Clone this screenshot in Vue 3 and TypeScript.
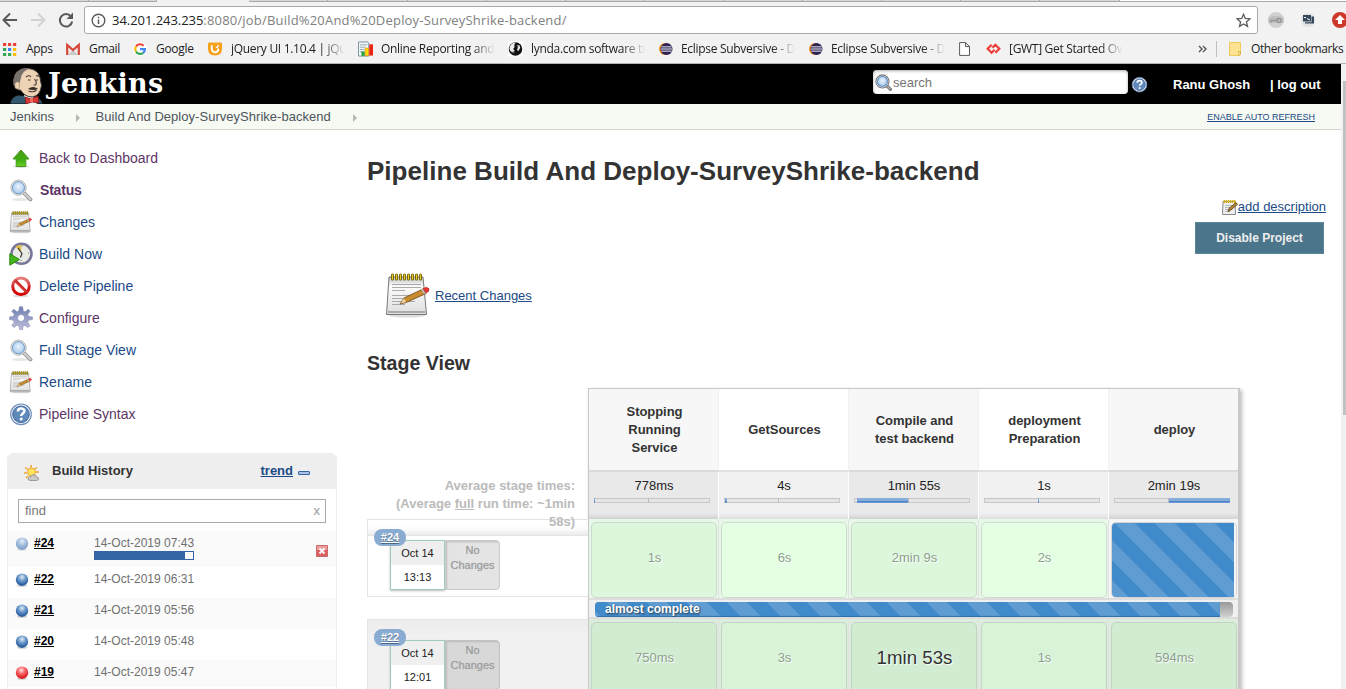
<script setup lang="ts">
interface Bookmark { icon: string; label: string; width: number; fade?: boolean }
interface Task { icon: string; label: string; visited?: boolean; current?: boolean }
interface Build { id: string; date: string; icon: string; progress?: number }
interface Stage { name: string; avg: string; from: number; to: number }
interface Run { id: string; day: string; time: string; cells: string[]; running?: boolean }

const tabs: number[] = [89, 68]
const laterTabs: number[] = [79, 80, 79, 79, 79, 79, 79, 79, 79, 79, 80]

const bookmarks: Bookmark[] = [
  { icon: 'apps', label: 'Apps', width: 63 },
  { icon: 'gmail', label: 'Gmail', width: 67 },
  { icon: 'google', label: 'Google', width: 75 },
  { icon: 'jquery', label: 'jQuery UI 1.10.4 | jQu', width: 150, fade: true },
  { icon: 'report', label: 'Online Reporting and', width: 150, fade: true },
  { icon: 'lynda', label: 'lynda.com software tr', width: 150, fade: true },
  { icon: 'eclipse', label: 'Eclipse Subversive - D', width: 150, fade: true },
  { icon: 'eclipse', label: 'Eclipse Subversive - D', width: 150, fade: true },
  { icon: 'file', label: '', width: 28 },
  { icon: 'gwt', label: '[GWT] Get Started Ov', width: 150, fade: true },
]

const tasks: Task[] = [
  { icon: 'up', label: 'Back to Dashboard', visited: true },
  { icon: 'search', label: 'Status', visited: true, current: true },
  { icon: 'notepad', label: 'Changes' },
  { icon: 'clock', label: 'Build Now' },
  { icon: 'stop', label: 'Delete Pipeline' },
  { icon: 'gear', label: 'Configure', visited: true },
  { icon: 'search', label: 'Full Stage View' },
  { icon: 'notepad', label: 'Rename' },
  { icon: 'help', label: 'Pipeline Syntax', visited: true },
]

const builds: Build[] = [
  { id: '#24', date: '14-Oct-2019 07:43', icon: 'pale', progress: 92 },
  { id: '#22', date: '14-Oct-2019 06:31', icon: 'blue' },
  { id: '#21', date: '14-Oct-2019 05:56', icon: 'blue' },
  { id: '#20', date: '14-Oct-2019 05:48', icon: 'blue' },
  { id: '#19', date: '14-Oct-2019 05:47', icon: 'red' },
]

const stages: Stage[] = [
  { name: 'Stopping Running Service', avg: '778ms', from: 0, to: 1 },
  { name: 'GetSources', avg: '4s', from: 1, to: 3 },
  { name: 'Compile and test backend', avg: '1min 55s', from: 3, to: 54 },
  { name: 'deployment Preparation', avg: '1s', from: 54, to: 55 },
  { name: 'deploy', avg: '2min 19s', from: 55, to: 116 },
]

const runs: Run[] = [
  { id: '#24', day: 'Oct 14', time: '13:13', cells: ['1s', '6s', '2min 9s', '2s', ''], running: true },
  { id: '#22', day: 'Oct 14', time: '12:01', cells: ['750ms', '3s', '1min 53s', '1s', '594ms'] },
]
</script>

<template>
  <div class="window">
    <svg class="defs" width="0" height="0" aria-hidden="true">
      <defs>
        <linearGradient id="g-green" x1="0" y1="0" x2="0" y2="1"><stop offset="0" stop-color="#4a9a1c" /><stop offset=".6" stop-color="#3fae0e" /><stop offset="1" stop-color="#6ccf28" /></linearGradient>
        <linearGradient id="g-paper" x1="0" y1="0" x2="0" y2="1"><stop offset="0" stop-color="#c4c4c4" /><stop offset=".25" stop-color="#fbfbfb" /><stop offset="1" stop-color="#dedede" /></linearGradient>
        <linearGradient id="g-red" x1="0" y1="0" x2="0" y2="1"><stop offset="0" stop-color="#e58080" /><stop offset=".6" stop-color="#cf1b1b" /><stop offset="1" stop-color="#d80000" /></linearGradient>
        <linearGradient id="g-gear" x1="0" y1="0" x2="0" y2="1"><stop offset="0" stop-color="#6c7fae" /><stop offset="1" stop-color="#c3bfdf" /></linearGradient>
        <radialGradient id="g-lens" cx=".5" cy=".4" r=".6"><stop offset="0" stop-color="#e8f2fc" /><stop offset="1" stop-color="#a9cbee" /></radialGradient>
        <radialGradient id="g-blue" cx=".5" cy=".3" r=".65"><stop offset="0" stop-color="#e4ecf2" /><stop offset=".45" stop-color="#6f9ccb" /><stop offset="1" stop-color="#22559b" /></radialGradient>
        <radialGradient id="g-pale" cx=".5" cy=".3" r=".65"><stop offset="0" stop-color="#e6eef5" /><stop offset=".5" stop-color="#a5c0df" /><stop offset="1" stop-color="#7d9fcb" /></radialGradient>
        <radialGradient id="g-ball" cx=".45" cy=".3" r=".65"><stop offset="0" stop-color="#ffdede" /><stop offset=".45" stop-color="#f96a6a" /><stop offset="1" stop-color="#dc1118" /></radialGradient>
      </defs>
      <symbol id="i-apps" viewBox="0 0 14 14">
        <path fill="#ea4335" d="M0 1h3.2v3H0zM5 1h3.2v3H5zM10 1h3.2v3H10z" />
        <path fill="#34a853" d="M0 6h3.2v3H0zM0 11h3.2v3H0zM5 11h3.2v3H5z" /><path fill="#4285f4" d="M5 6h3.2v3H5z" /><path fill="#fbbc05" d="M10 6h3.2v3H10zM10 11h3.2v3H10z" />
      </symbol>
      <symbol id="i-gmail" viewBox="0 0 14 14"><path fill="#eee" d="M2 3h10v10H2z" /><path fill="#c9c9c9" d="M2 13l5-5 5 5z" /><path d="M1.2 13V3L7 8l5.8-5v10" fill="none" stroke="#d6453a" stroke-width="2.2" /></symbol>
      <symbol id="i-google" viewBox="0 0 14 14">
        <circle cx="7" cy="7" r="7" fill="#fff" /><g fill="none" stroke-width="2.2"><path d="M3 4.5A4.8 4.8 0 0 1 10.6 3.8" stroke="#ea4335" /><path d="M3 9.5a4.8 4.8 0 0 1 0-5" stroke="#fbbc05" /><path d="M10.2 10.8A4.8 4.8 0 0 1 3 9.5" stroke="#34a853" /><path d="M7 7.2h4.9a4.8 4.8 0 0 1-1.7 3.6" stroke="#4285f4" /></g>
      </symbol>
      <symbol id="i-jquery" viewBox="0 0 15 14"><path fill="#f7a01a" d="M0 1.5Q0 0 1.500 0h12Q15 0 15 1.500v5Q15 14 7.500 14T0 6.500z" /><path d="M4 3v3q0 4.500 3.500 4.500T11 6.500" fill="none" stroke="#fff" stroke-width="2" /><path d="M8.500 5q2 1 2.500-2.500" fill="none" stroke="#fff" stroke-width="1.500" /></symbol>
      <symbol id="i-report" viewBox="0 0 16 16"><path fill="#f6f9fa" stroke="#708c98" d="M.5.5h10l1 2v13h-11z" /><path d="M2 3.500h8M2 6h6M2 8.500h5M2 11h4" stroke="#8fa5af" /><path fill="#26ae3a" stroke="#16852a" stroke-width=".5" d="M4 11h3v4H4z" /><path fill="#ffdb00" stroke="#ee8200" stroke-width=".6" d="M7.700 7h3.600v8H7.700z" /><path fill="#ed2314" d="M12 3h4v12h-4z" /></symbol>
      <symbol id="i-lynda" viewBox="0 0 16 16"><path fill="#fff" d="M0 0h16v16H0z" /><circle cx="8" cy="8" r="7.200" fill="#111" /><path fill="#eee" d="M1.500 8Q2 1 8.500 1q-2.500 2-1.500 5l-1.500 2 1.800 2-3 1.500Q2.500 11 1.500 8zM10 4q3-1 3 3l-2 3-1.500-1 1-2z" /><path d="M9 4l3 1M3 11l4 1" stroke="#777" /></symbol>
      <symbol id="i-eclipse" viewBox="0 0 15 14"><circle cx="6.500" cy="7" r="6.500" fill="#f7941e" /><circle cx="8" cy="7" r="6.500" fill="#2c2255" /><path d="M2.500 4.700h11M2 7h12M2.500 9.300h11" stroke="#fff" stroke-width="1" /></symbol>
      <symbol id="i-file" viewBox="0 0 11 14"><path fill="#fff" stroke="#5a5a5a" d="M.6.6h5.900l4 4v8.800H.6zM6.500.6v4h4" /></symbol>
      <symbol id="i-gwt" viewBox="0 0 16 12"><path d="M6 1.500 1.800 5.800 6 10l3.200-3.200M10 10l4.200-4.200L10 1.500 6.800 4.700" fill="none" stroke="#ee3e3a" stroke-width="2.400" /></symbol>
      <symbol id="i-up" viewBox="0 0 24 24"><ellipse cx="12" cy="20.500" rx="8" ry="1.500" fill="#ddd" /><path fill="url(#g-green)" stroke="#459a1c" d="M12 4 20 13h-3.200v7.500H7.200V13H4z" /></symbol>
      <symbol id="i-search" viewBox="0 0 24 24"><ellipse cx="12" cy="21.500" rx="9" ry="1.500" fill="#e6e6e6" /><path d="m15.500 15.500 6 6" stroke="#8b8b8b" stroke-width="3.800" stroke-linecap="round" /><path d="m15.500 15.500 6 6" stroke="#d4d4d4" stroke-width="2" stroke-linecap="round" /><circle cx="9.500" cy="9.700" r="7.600" fill="#e6e6e4" stroke="#a7a7a7" stroke-width=".8" /><circle cx="9.500" cy="9.700" r="6" fill="url(#g-lens)" stroke="#6c98cc" /></symbol>
      <symbol id="i-find" viewBox="0 0 16 16"><path d="m11 11 3.500 3.500" stroke="#777" stroke-width="3" stroke-linecap="round" /><path d="m11 11 3.500 3.500" stroke="#bbb" stroke-width="1" /><circle cx="7" cy="7" r="6.200" fill="#eee" stroke="#777" /><circle cx="7" cy="7" r="4.600" fill="url(#g-lens)" stroke="#5486c2" /></symbol>
      <symbol id="i-notepad" viewBox="0 0 48 48">
        <ellipse cx="23" cy="44.500" rx="18" ry="2" fill="#ddd" /><path fill="url(#g-paper)" stroke="#777" stroke-linejoin="round" d="M5 6h34l3.500 37.500h-40z" /><path fill="#aaa" d="M4 40h37v2H4z" />
        <path d="M8 13.500h29M8 16.500h29M8 19.500h13M8 24.500h27M8 27.500h23M8 30.500h23M8 33.500h13" stroke="#a2a2a2" stroke-width=".9" />
        <path d="M8.500 4v4M12.500 4v4M16.500 4v4M20.500 4v4M24.500 4v4M28.500 4v4M32.500 4v4M36.500 4v4" stroke="#6b5a00" stroke-width="3" stroke-linecap="round" /><path d="M8.500 4v4M12.500 4v4M16.500 4v4M20.500 4v4M24.500 4v4M28.500 4v4M32.500 4v4M36.500 4v4" stroke="#e8cd30" stroke-width="1.300" stroke-linecap="round" />
        <path fill="#c98d30" stroke="#75501a" stroke-width=".9" d="m16 33 4-6 19-9 3 4.500-20 9z" /><path fill="#efd6aa" d="m16.500 32.500 3.500-5.200 2 3.800z" /><path fill="#bbb" d="m37 18.500 2-1 3 4.500-2 1z" /><path fill="#e33" stroke="#a22" stroke-width=".6" d="m39 17.500 3.500-1.200q4 1 2 4l-2.500 1.700z" />
      </symbol>
      <symbol id="i-clock" viewBox="0 0 24 24"><circle cx="12.500" cy="11.800" r="10" fill="#e9ebe5" stroke="#777799" stroke-width="2.600" /><path fill="#e3bd48" d="M12 11 6.500 4.500Q10 2.500 12.500 3z" /><path d="m9 6 4 5.500-1.500 4" fill="none" stroke="#333" stroke-width="1.200" /><path d="M13 3.500v1M20 11h-1M12 19v-1" stroke="#777" /><path fill="#45b31b" stroke="#2b8b0c" d="M.8 11.700 10.500 17.500.8 23.200z" /></symbol>
      <symbol id="i-stop" viewBox="0 0 24 24"><ellipse cx="12" cy="22" rx="8" ry="1.300" fill="#ddd" /><circle cx="12" cy="12.300" r="8.300" fill="#fff" stroke="url(#g-red)" stroke-width="3" /><path d="m6 6.300 12 12" stroke="#d13030" stroke-width="3" /></symbol>
      <symbol id="i-gear" viewBox="0 0 24 24"><path fill="url(#g-gear)" stroke="#8a8fb8" stroke-width=".7" fill-rule="evenodd" d="m10.400.8 3.200 0 .6 4.200 2 .8 3-2.500 1.900 2-2.400 3.100.9 2.200 3.800.3v2.700l-3.900.5-.9 2.200 2.300 3.300-1.900 1.900-3-2.300-2 .8-.5 3.600h-2.800l-.6-3.700-2.200-.8-3 2.300-1.900-1.900 2.200-3.200-.9-2.200-3.700-.5v-2.700l3.800-.4.9-2.200-2.500-3 2-2 3.100 2.400 1.900-.7zM12 8.500a3.500 3.500 0 1 0 .1 0z" /></symbol>
      <symbol id="i-help" viewBox="0 0 24 24"><circle cx="12" cy="12.300" r="10.300" fill="#f4f7fb" stroke="#6d8db8" stroke-width="1.200" /><circle cx="12" cy="12.300" r="8.300" fill="#5f88bb" stroke="#44699b" /><path d="M8.800 9.500q.2-3 3.300-3t3.300 2.600c0 2.300-3.200 2.400-3.200 4.800" fill="none" stroke="#fff" stroke-width="2.500" /><circle cx="12.200" cy="17" r="1.500" fill="#fff" /></symbol>
      <symbol id="i-blue" viewBox="0 0 14 14"><ellipse cx="7" cy="12.500" rx="5" ry="1.300" fill="#ccc" /><circle cx="7" cy="6.700" r="6.200" fill="url(#g-blue)" /></symbol>
      <symbol id="i-pale" viewBox="0 0 14 14"><ellipse cx="7" cy="12.500" rx="5" ry="1.300" fill="#ddd" /><circle cx="7" cy="6.700" r="6.200" fill="url(#g-pale)" /></symbol>
      <symbol id="i-red" viewBox="0 0 14 14"><ellipse cx="7" cy="12.500" rx="5" ry="1.300" fill="#ccc" /><circle cx="7" cy="6.700" r="6.200" fill="url(#g-ball)" /></symbol>
    </svg>

    <header class="chrome">
      <div class="tabs">
        <i v-for="(w, i) in tabs" :key="'a' + i" class="tab" :style="{ width: w + 'px' }"></i>
        <i class="tab active"></i>
        <i v-for="(w, i) in laterTabs" :key="'b' + i" class="tab" :style="{ width: w + 'px' }"></i>
        <i class="rest"></i>
      </div>
      <div class="toolbar">
        <svg class="nav" width="84" height="28" viewBox="0 0 84 28" fill="none" stroke-width="2">
          <path d="M17 14H4M10 7.500 3.500 14l6.500 6.500" stroke="#5a5a5a" /><path d="M31 14h13M38 7.500l6.500 6.500-6.500 6.500" stroke="#d2d2d2" />
          <path d="M71 10.500A6.200 6.200 0 1 0 72.200 15.500" stroke="#5a5a5a" /><path fill="#5a5a5a" d="M73 6.500v6.500h-6.500z" />
        </svg>
        <div class="url">
          <svg width="15" height="15" viewBox="0 0 15 15"><circle cx="7.500" cy="7.500" r="6.300" fill="none" stroke="#5a5a5a" stroke-width="1.400" /><path d="M7.500 6.500V11M7.500 3.700v1.600" stroke="#5a5a5a" stroke-width="1.500" /></svg>
          <span class="address"><b>34.201.243.235</b>:8080/job/Build%20And%20Deploy-SurveyShrike-backend/</span>
          <svg class="star" width="15" height="15" viewBox="0 0 15 15"><path d="m7.500 1.300 1.800 4.200 4.600.4-3.500 3 1.100 4.500-4-2.400-4 2.400 1.100-4.500-3.500-3 4.600-.4z" fill="none" stroke="#5a5a5a" stroke-width="1.300" /></svg>
        </div>
        <svg class="ext" width="88" height="28" viewBox="0 0 88 28">
          <circle cx="18" cy="14" r="8" fill="#d0d0d0" /><path fill="#bdbdbd" d="M10.500 12q7-4 15 0v5h-15z" /><circle cx="21" cy="14.500" r="2" fill="none" stroke="#969696" stroke-width="1.500" /><path d="M19 14.500h-6v2" fill="none" stroke="#969696" stroke-width="1.500" />
          <circle cx="50" cy="14" r="7" fill="#e3e3e3" /><path fill="#34495e" d="M45 9h8v6.500h-8zM53.500 10.500H56v7h-9V16.300h6.500z" /><path d="M46 11.500h2m1 1 3 1.500" stroke="#fff" />
          <circle cx="82" cy="14" r="8" fill="#cc392b" /><path fill="#fff" d="m82 9 5 5h-3v4h-4v-4h-3z" />
        </svg>
      </div>
      <div class="bookmarks">
        <div v-for="(b, i) in bookmarks" :key="i" class="bookmark" :style="{ width: b.width + 'px' }">
          <svg :class="['fav', b.icon]"><use :href="'#i-' + b.icon" /></svg>
          <span :class="{ fade: b.fade }">{{ b.label }}</span>
        </div>
        <svg class="more" width="9" height="8" viewBox="0 0 9 8"><path d="m1 1 3 3-3 3m4-6 3 3-3 3" fill="none" stroke="#555" stroke-width="1.400" /></svg>
        <i class="divider"></i>
        <svg class="folder" width="13" height="14" viewBox="0 0 13 14"><path fill="#fde293" stroke="#eccb5b" d="M.5.5h11v10l-1 3H.5z" /><path fill="#fff0b5" stroke="#d9b43c" d="M9.500 9.500h2v3l-1.500 1z" /></svg>
        <span class="other">Other bookmarks</span>
      </div>
    </header>

    <div class="page">
      <div class="content">
        <div class="topbar">
          <svg class="butler" width="34" height="37" viewBox="0 0 34 37">
            <path fill="#31586f" stroke="#111" d="M0 37q1-7 8-9l18 2q6 2 6.500 7z" /><path fill="#eee" d="m14 28 9 1 4 8H17z" />
            <path fill="#edd2b4" stroke="#333" d="M5 12Q7 1.500 18 1.500q10 .5 12 9l1.500 8q-1 10-9 11.500-8 0-12-7-4 1-5-5z" />
            <path fill="#77706b" d="M3.300 18Q2 6 11 2q5-2 9-.4Q12 4 11 11l-2 7-4 1z" /><path fill="#edd2b4" stroke="#8a705c" stroke-width=".5" d="M5 16q4-3 4.500 1 .5 5-2.500 5t-2-6z" />
            <path d="M16 10q3-2.500 5 0m5-1q2-1 3.500 1M18 13h2.500m5.500 0h2m-3.500-1q3 4 1 6h-2m-5 6q5 2 8-1" fill="none" stroke="#4b3e38" stroke-width="1.100" /><path fill="#332b28" d="M18 22q5-4 10 0-5 2-10 0z" />
            <path fill="#d93832" stroke="#701512" stroke-width=".7" d="m15 30 6 2 7-3 1 7-7-1-6 2z" /><path fill="#ef6b60" d="M20 31h3v4h-3z" />
          </svg>
          <span class="brand">Jenkins</span>
          <div class="search"><svg width="17" height="17"><use href="#i-find" /></svg><span>search</span></div>
          <svg class="q" width="17" height="17"><use href="#i-help" /></svg>
          <a class="user">Ranu Ghosh</a><a class="logout">| log out</a>
        </div>
        <nav class="crumbs">
          <a>Jenkins</a><i></i><a class="job">Build And Deploy-SurveyShrike-backend</a><i></i>
          <a class="refresh">ENABLE AUTO REFRESH</a>
        </nav>
        <div class="body">
          <aside>
            <a v-for="t in tasks" :key="t.label" class="task" :class="{ visited: t.visited, current: t.current }">
              <svg width="24" height="24"><use :href="'#i-' + t.icon" /></svg><span>{{ t.label }}</span>
            </a>
            <section class="history">
              <div class="history-head">
                <svg width="16" height="16" viewBox="0 0 16 16"><path d="M7 0v3M1 2.500l3 2M0 8h3M13 2.500l-3 2M2 13l2-2M15 7h-3" stroke="#f0a63c" stroke-width="1.500" /><circle cx="7.500" cy="7" r="4" fill="#ffe45c" stroke="#eda83e" /><path fill="#ccc9c4" stroke="#8d8b87" stroke-width=".8" d="M6 15.500q-3-.5-1.500-3 1-1.500 2.500-.8 1-3 4-1.500 1.500.5 1.500 2 2.500 0 2 2-.3 1.300-2 1.300z" /></svg>
                <span>Build History</span><a>trend</a><i></i>
              </div>
              <div class="find"><span>find</span><em>x</em></div>
              <div v-for="b in builds" :key="b.id" class="build" :class="{ active: b.progress }">
                <svg width="14" height="14"><use :href="'#i-' + b.icon" /></svg>
                <a>{{ b.id }}</a>
                <div class="when"><span>{{ b.date }}</span><div v-if="b.progress" class="meter"><i :style="{ width: b.progress + '%' }"></i></div></div>
                <svg v-if="b.progress" class="kill" width="12" height="12" viewBox="0 0 12 12"><path fill="#dc6060" stroke="#c96a6a" d="M.5.5h11v11H.5z" /><path fill="#ec9c9c" d="M1 1h10v4H1z" /><path d="m3.500 3.500 5 5m0-5-5 5" stroke="#fff" stroke-width="1.800" /></svg>
              </div>
            </section>
          </aside>
          <main>
            <h1>Pipeline Build And Deploy-SurveyShrike-backend</h1>
            <div class="describe"><svg width="16" height="16" viewBox="0 0 16 16"><path fill="#eee" stroke="#8a8a8a" d="M1 2.500h12l.5 13H.5z" /><path d="M3 6.500h7M3 8.500h5M3 10.500h4M3 12.500h5" stroke="#aaa" stroke-width=".8" /><path d="M1.500 2.500h12" stroke="#d4b21c" stroke-width="3" stroke-dasharray="1.500 .6" /><path fill="#b8862f" stroke="#4d3613" stroke-width=".8" d="m6 12.500 1-3L14 3.500l1.500 1.800-7 6z" /></svg><a>add description</a></div>
            <button type="button">Disable Project</button>
            <div class="recent"><svg width="48" height="48"><use href="#i-notepad" /></svg><a>Recent Changes</a></div>
            <h2>Stage View</h2>
            <div class="stage-view">
              <div class="left">
                <div class="averages">Average stage times:<br>(Average <u>full</u> run time: ~1min 58s)</div>
                <div v-for="r in runs" :key="r.id" class="run-info" :class="{ done: !r.running }">
                  <a class="badge">{{ r.id }}</a>
                  <div class="stamp"><span>{{ r.day }}</span><span>{{ r.time }}</span></div>
                  <div class="nochange">No<br>Changes</div>
                </div>
              </div>
              <div class="grid">
                <div class="heads"><div v-for="s in stages" :key="s.name" class="head"><span>{{ s.name }}</span></div></div>
                <div class="avgs">
                  <div v-for="s in stages" :key="s.name" class="avg">
                    <span>{{ s.avg }}</span>
                    <div class="track"><i :style="{ marginLeft: s.from + 'px', width: (s.to - s.from) + 'px' }"></i></div>
                  </div>
                </div>
                <template v-for="r in runs" :key="r.id">
                  <div class="cells" :class="{ done: !r.running }">
                    <div v-for="(c, i) in r.cells" :key="i" class="cell" :class="{ pending: !c }">
                      <div class="box" :class="{ big: c === '1min 53s' }"><span v-if="c">{{ c }}</span><i v-else class="stripes"></i></div>
                    </div>
                  </div>
                  <div v-if="r.running" class="overall"><div class="rail"><div class="stripes">almost complete</div></div></div>
                </template>
              </div>
            </div>
          </main>
        </div>
      </div>
      <div class="scrollbar"><i></i></div>
    </div>
  </div>
</template>

<style>
body { overflow: hidden; background: #fff; }
</style>

<style scoped>
* { box-sizing: border-box; }
.window { width: 1346px; height: 689px; overflow: hidden; display: flex; flex-direction: column; font: 13px/18px "Liberation Sans", Arial, sans-serif; color: #333; }
.defs { position: absolute; }
svg { display: block; flex: none; }
a, u { text-underline-offset: 1px; }

.chrome { flex: none; height: 64px; background: #f2f2f2; border-bottom: 1px solid #b6b5b6; font-family: "Open Sans", "Noto Sans", sans-serif; }
.tabs { display: flex; height: 2px; }
.tab { flex: none; background: #d8d8d8; border-bottom: 1px solid #a9a9a9; border-right: 1px solid #a9a9a9; }
.tab.active { width: 92px; background: #f2f2f2; border: 0; }
.rest { flex: 1; background: #fff; border-bottom: 1px solid #a9a9a9; }
.toolbar { display: flex; height: 36px; padding-top: 4px; }
.url { flex: none; width: 1174px; height: 28px; display: flex; align-items: center; background: #fff; border: 1px solid #a9a9a9; border-radius: 3px; padding: 0 6px; }
.address { margin-left: 6px; font-size: 13px; color: #808080; white-space: nowrap; letter-spacing: .19px; }
.address b { font-weight: 400; color: #222; letter-spacing: -.05px; }
.star { margin-left: auto; }
.bookmarks { display: flex; height: 25px; padding: 0 0 3px 3px; align-items: center; font-size: 12px; letter-spacing: -.3px; color: #222; white-space: nowrap; }
.bookmark { flex: none; display: flex; align-items: center; gap: 9px; }
.fav { width: 14px; height: 14px; }
.fav.report, .fav.lynda, .fav.gwt { width: 15px; height: 16px; }
.fav.report + span, .fav.lynda + span, .fav.gwt + span { margin-left: -1px; }
.fav.file { width: 11px; margin-left: 1px; }
.fav.eclipse { margin-left: 1px; }
.fav.eclipse + span { margin-left: -1px; }
.fade { width: 114px; -webkit-mask-image: linear-gradient(90deg, #000 80%, transparent); mask-image: linear-gradient(90deg, #000 80%, transparent); }
.more { margin-left: 62px; }
.divider { width: 1px; height: 16px; background: #c0c0c0; margin: 0 12px 0 9px; }
.other { margin-left: 9px; letter-spacing: -.42px; }

.page { flex: 1; display: flex; min-height: 0; }
.content { width: 1341px; overflow: hidden; }
.scrollbar { width: 5px; background: #f1f1f1; padding: 17px 0 0 2px; }
.scrollbar i { display: block; height: 334px; background: #c1c1c1; }
.topbar { height: 40px; background: #000; color: #fff; display: flex; align-items: center; font-weight: 700; }
.butler { margin: 3px 0 0 10px; }
.brand { margin: -1px 0 0 4px; width: 116px; font: 700 27px/32px "DejaVu Serif", serif; letter-spacing: .3px; white-space: nowrap; }
.search { margin: -4px 0 0 709px; width: 255px; height: 24px; padding-left: 2px; gap: 1px; border-radius: 4px; background: #fff; box-shadow: inset 0 1px 3px #aaa; display: flex; align-items: center; color: #757575; font-weight: 400; }
.search span { margin-top: 2px; }
.q { margin-left: 3px; }
.user { margin: 2px 0 0 25px; width: 97px; }
.logout { margin-top: 2px; }
.crumbs { height: 26px; background: #f6faf2; border-bottom: 1px solid #d3d7cf; display: flex; align-items: center; padding-left: 10px; color: #4d545d; }
.crumbs i { margin: 2px 15px 0 22px; width: 0; height: 0; border: 4px solid transparent; border-left-color: #b5b8b2; border-right: 0; }
.crumbs .job { letter-spacing: .03px; padding-left: .5px; }
.crumbs .refresh { margin-left: auto; padding-right: 26px; color: #204a87; font-size: 9px; text-decoration: underline; }

.body { display: flex; height: 559px; }
aside { width: 337px; padding: 12px 0 0 7px; }
.task { height: 32px; display: flex; align-items: center; padding-left: 2px; gap: 6px; color: #204a87; font-size: 14px; }
.task.visited { color: #5c3566; }
.task.current { font-weight: 700; }
.task.current span { padding-left: 1px; letter-spacing: -.2px; }
.history { margin-top: 23px; border: 1px solid #eee; border-radius: 6px 6px 0 0; height: 260px; }
.history-head { height: 35px; background: #eee; border-radius: 5px 5px 0 0; display: flex; align-items: center; padding: 0 0 2px 16px; font-weight: 700; }
.history-head svg { margin-top: 4px; }
.history-head span { margin-left: 12px; width: 208.5px; }
.history-head a { color: #204a87; text-decoration: underline; }
.history-head i { width: 12px; height: 4px; margin: 4px 0 0 5px; background: #aac3e4; border: 1px solid #3465a4; border-radius: 1px; }
.find { margin: 10px 10px 8px; height: 24px; border: 1px solid #a9a9a9; display: flex; justify-content: space-between; padding: 0 5px 0 6px; line-height: 22px; color: #777; }
.find em { font-style: normal; color: #999; }
.build { height: 31px; display: flex; padding-left: 7px; font-size: 12px; line-height: 24px; color: #707070; }
.build:nth-child(odd) { background: #fafafa; }
.build:last-child { height: 27px; }
.build svg { margin-top: 6px; }
.build a { width: 60px; margin-left: 5px; font-weight: 700; color: #000; text-decoration: underline; }
.build.active { height: 36px; }
.when span { display: block; height: 20px; }
.meter { width: 100px; height: 9px; border: 1px solid #3465a4; }
.meter i { display: block; height: 100%; background: #3465a4; }
.build .kill { margin: 14px 0 0 122px; }

main { width: 1004px; padding-left: 30px; display: flex; flex-direction: column; }
h1 { margin: 26px 0 0; font-size: 26px; line-height: 30px; white-space: nowrap; letter-spacing: .02px; }
.describe { display: flex; align-self: flex-end; margin: 12px 15px 0 0; height: 18px; }
.describe svg { margin-top: 1px; }
.describe a, .recent a { color: #204a87; text-decoration: underline; }
.recent a { margin-top: 2px; }
button { align-self: flex-end; width: 129px; height: 32px; margin: 6px 17px 0 0; padding: 0; border: 1px solid #5a8599; background: #4b758b; color: #eee; font: 700 12px "Liberation Sans", Arial, sans-serif; }
.recent { display: flex; align-items: center; margin: 17px 0 0 17px; height: 48px; gap: 3px; }
h2 { margin: 33px 0 0; font-size: 19.6px; line-height: 22px; height: 37px; }
.stage-view { display: flex; height: 301px; overflow: visible; }
.left { width: 221px; }
.averages { height: 131px; padding: 89px 13px 0 0; text-align: right; font-weight: 700; color: #bbb; position: relative; z-index: 1; }
.run-info { height: 78px; margin-bottom: 22px; border: 1px solid #e4e4e4; border-right: 0; display: flex; padding: 20px 0 0 22px; position: relative; background: linear-gradient(#fff 0, #fdfdfd 8px, #ececec 15px, #ddd 16px, #fff 16px); }
.run-info.done { height: 90px; background: linear-gradient(#ececec, #f1f1f1 16px); }
.badge { position: absolute; left: 6px; top: 9px; width: 32px; height: 17px; border-radius: 8px; background: #8aacd2; color: #fff; font-size: 11px; font-weight: 700; line-height: 17px; text-align: center; text-decoration: underline; text-shadow: 0 1px 1px #4c6987; }
.stamp { width: 55px; height: 50px; border: 1px solid #9fcdb9; background: #fff; font-size: 11px; line-height: 24px; text-align: center; box-shadow: 0 1px 2px #bbb; color: #222; }
.stamp span { display: block; height: 24px; }
.stamp span:first-child { background: #efefef; }
.nochange { width: 55px; height: 50px; border: 1px solid #ccc; border-radius: 0 4px 4px 0; background: #e4e4e4; box-shadow: inset 1px 1px 2px #bbb; font-size: 11px; line-height: 15px; padding-top: 2px; text-align: center; color: #999; text-shadow: 0 0 1px #bbb; }
.done .nochange { background: #d8d8d8; border-color: #c2c2c2; }
.grid { width: 652px; height: 320px; border: 1px solid #c8c8c8; border-right-width: 2px; box-shadow: 2px 2px 4px #bbb; background: #f0f0f0; }
.heads, .avgs, .cells { display: grid; grid-template-columns: repeat(5, 130px); width: 649px; overflow: hidden; }
.head { height: 83px; border-bottom: 2px solid #e0e0e0; border-right: 1px solid #f0f0f0; background: #fff; display: flex; align-items: center; justify-content: center; text-align: center; font-weight: 700; padding-left: 2px; letter-spacing: -.05px; }
.head span { width: 90px; }
.head:nth-child(odd) { background: #f7f7f7; border-bottom-color: #dadada; }
.avg { height: 47px; padding-top: 5px; text-align: center; border-right: 1px solid #fff; background: linear-gradient(#f1f1f1, #f1f1f1 41px, #dedede); }
.avg:nth-child(odd) { background: linear-gradient(#e9e9e9, #e9e9e9 41px, #d2d2d2); }
.avg span { display: block; height: 21px; color: #222; padding-left: 1px; }
.track { width: 116px; height: 5px; margin-left: 5px; background: linear-gradient(90deg, transparent 54px, #bbb 54px, #bbb 55px, transparent 55px), linear-gradient(#c6c6c6 1px, #e5e5e5 1px 4px, #c8c8c8 4px); box-shadow: inset 1px 0 #c8c8c8, inset -1px 0 #c8c8c8; }
.track i { display: block; height: 5px; background: linear-gradient(#86acd8 3px, #4c7ed2 3px 4px, #6d98d2 4px); }
.cell { height: 79px; padding: 3px 2px 1px; border-right: 1px solid #e2e2e2; background: #e8f8e8; }
.box { height: 76px; width: 126px; border: 1px solid #cfdacf; border-radius: 5px; background: #e4ffe4; display: flex; align-items: center; justify-content: center; color: #8f9f8f; padding: 0 0 4px 1px; text-shadow: 1px 1px 1px #fff; }
.cell:nth-child(odd) .box { background: #ddf7dd; }
.cell.pending { background: #f6f6f6; }
.cell.pending .box { background: #f5f5f5; border-color: #d5d5d5; padding: 0; justify-content: flex-start; }
.stripes { background: #428bca linear-gradient(45deg, rgba(255,255,255,.15) 25%, transparent 25%, transparent 50%, rgba(255,255,255,.15) 50%, rgba(255,255,255,.15) 75%, transparent 75%) 3px 0 / 40px 40px; }
.box .stripes { width: 122px; height: 74px; border-radius: 4px 0 0 4px; }
.overall { height: 21px; border-top: 2px solid #ddd; border-bottom: 2px solid #dcdcdc; padding: 2px 6px; background: #f0f0f0; }
.rail { width: 638px; height: 15px; border-radius: 4px; background: linear-gradient(#999, #d0d0d0); overflow: hidden; }
.overall .stripes { width: 625px; height: 15px; padding-left: 10px; background-position: 12px 0; box-shadow: inset 0 -1px 1px #2d6fa8; color: #fff; font-size: 12px; font-weight: 700; line-height: 14px; text-shadow: 1px 1px 2px #234; }
.done .cell { background: #dcecdc; }
.done .box { background: #d8f3d8; border-color: #c4d4c4; }
.done .cell:nth-child(odd) .box { background: #d2ecd2; }
.big { font-size: 18.7px; }
.done .box.big { color: #333; }
</style>
